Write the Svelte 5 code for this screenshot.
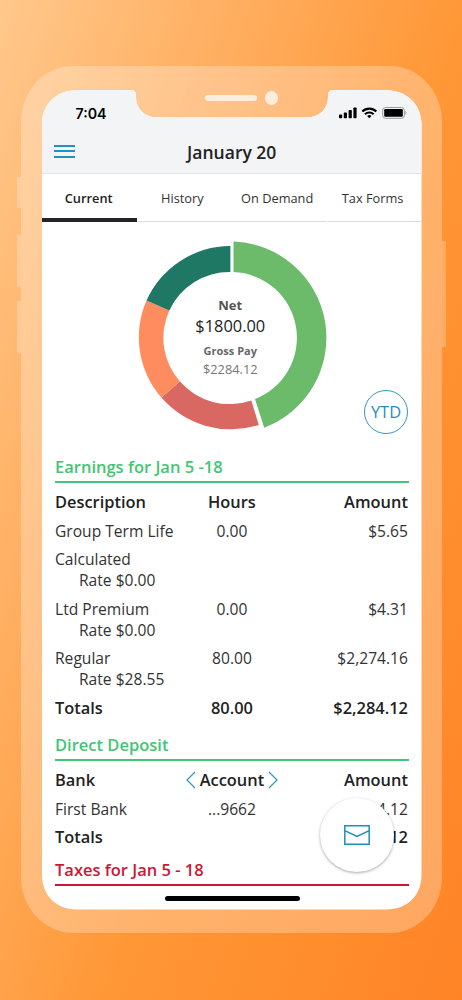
<script>
  const tabs = ['Current', 'History', 'On Demand', 'Tax Forms'];
  let activeTab = $state('Current');

  const sections = [
    {
      title: 'Earnings for Jan 5 -18',
      tone: 'green',
      columns: ['Description', 'Hours', 'Amount'],
      rows: [
        { label: 'Group Term Life', mid: '0.00', amount: '$5.65' },
        { label: 'Calculated', rate: 'Rate $0.00' },
        { label: 'Ltd Premium', rate: 'Rate $0.00', mid: '0.00', amount: '$4.31' },
        { label: 'Regular', rate: 'Rate $28.55', mid: '80.00', amount: '$2,274.16' },
      ],
      totals: ['80.00', '$2,284.12'],
    },
    {
      title: 'Direct Deposit',
      tone: 'green',
      columns: ['Bank', 'Account', 'Amount'],
      pager: true,
      rows: [{ label: 'First Bank', mid: '...9662', amount: '4.12' }],
      totals: ['', '4.12'],
    },
    { title: 'Taxes for Jan 5 - 18', tone: 'red' },
  ];

  const slices = [
    { color: '#6cbb6b', d: 'M95.5 3.5A96.3 96.3 0 0 1 126.2 189.8L117 161A65.7 65.7 0 0 0 95.5 34.1Z' },
    { color: '#d96862', d: 'M120.8 186.9A91.7 91.7 0 0 1 23.4 159.6L42 143.6A65.7 65.7 0 0 0 113.3 162.4Z' },
    { color: '#ff8c5e', d: 'M23.4 159.6A91.7 91.7 0 0 1 8.5 62.6L31.3 72.6A65.7 65.7 0 0 0 42 143.6Z' },
    { color: '#1e7863', d: 'M8.5 62.6A91.7 91.7 0 0 1 92.4 8.1V34A65.7 65.7 0 0 0 31.3 72.6Z' },
  ];
</script>

<div class="page">
  <div class="phone">
    <i class="side s1"></i>
    <i class="side s2"></i>
    <i class="side s3"></i>
    <i class="side s4"></i>
    <div class="speaker"><span></span><b></b></div>

    <div class="screen">
      <header>
        <div class="status">
          <span class="time">7:04</span>
          <svg width="68" height="13" viewBox="0 0 68 13">
            <rect x="0" y="8.5" width="3.2" height="3.7" rx="0.8" />
            <rect x="4.8" y="6.5" width="3.2" height="5.7" rx="0.8" />
            <rect x="9.6" y="4" width="3.2" height="8.2" rx="0.8" />
            <rect x="14.4" y="1.4" width="3.2" height="10.8" rx="0.8" />
            <g fill="none" stroke="#000" stroke-width="2.1">
              <path d="M23.3 5.4a10.1 10.1 0 0 1 14 0" />
              <path d="M26 8.2a6.2 6.2 0 0 1 8.6 0" />
            </g>
            <path d="M30.3 12.3l-2.2-2.2a3.2 3.2 0 0 1 4.4 0z" />
            <rect x="43.7" y="1.5" width="21.6" height="10.8" rx="2.8" fill="none" stroke="#999" />
            <rect x="45.2" y="3" width="18.6" height="7.8" rx="1.2" />
            <path d="M66.3 5.1c1.5.5 1.5 3.1 0 3.6z" fill="#999" />
          </svg>
        </div>
        <div class="title-bar">
          <button class="menu" aria-label="Menu"><i></i><i></i><i></i></button>
          <h1>January 20</h1>
        </div>
      </header>

      <nav>
        {#each tabs as tab}
          <button class:active={tab === activeTab} onclick={() => (activeTab = tab)}>{tab}</button>
        {/each}
      </nav>

      <div class="chart">
        <svg width="190" height="196" viewBox="0 0 190 196">
          {#each slices as slice}
            <path d={slice.d} fill={slice.color} />
          {/each}
        </svg>
        <div class="chart-text">
          <span class="net">Net</span>
          <span class="net-value">$1800.00</span>
          <span class="gross">Gross Pay</span>
          <span class="gross-value">$2284.12</span>
        </div>
        <button class="ytd">YTD</button>
      </div>

      <main>
        {#each sections as section}
          <section>
            <h2 class={section.tone}>{section.title}</h2>
            {#if section.columns}
              <div class="row strong head">
                <span>{section.columns[0]}</span>
                <span class="mid">
                  {#if section.pager}
                    <svg width="10" height="18" viewBox="0 0 10 18"><path d="M9 1L1 9l8 8" /></svg>
                  {/if}
                  {section.columns[1]}
                  {#if section.pager}
                    <svg width="10" height="18" viewBox="0 0 10 18"><path d="M1 1l8 8-8 8" /></svg>
                  {/if}
                </span>
                <span class="amount">{section.columns[2]}</span>
              </div>
              {#each section.rows as row}
                <div class="row">
                  <span>
                    {row.label}
                    {#if row.rate}<span class="rate">{row.rate}</span>{/if}
                  </span>
                  <span class="mid">{row.mid ?? ''}</span>
                  <span class="amount">{row.amount ?? ''}</span>
                </div>
              {/each}
              <div class="row strong">
                <span>Totals</span>
                <span class="mid">{section.totals[0]}</span>
                <span class="amount">{section.totals[1]}</span>
              </div>
            {/if}
          </section>
        {/each}
      </main>

      <button class="fab" aria-label="Messages">
        <svg width="26" height="20" viewBox="0 0 26 20" fill="none" stroke="#1f8fb8" stroke-width="1.5">
          <path d="M.8.8h24.4v18.4H.8zM.8 5.6L13 11.5l12.2-5.9" />
        </svg>
      </button>
      <div class="home-bar"></div>
    </div>
  </div>
</div>

<style>
  :global(body) {
    margin: 0;
  }

  .page {
    box-sizing: border-box;
    width: 462px;
    height: 1000px;
    padding: 66px 20px 0 21px;
    overflow: hidden;
    background: linear-gradient(110deg, #ffc88c 0%, #ffae60 29%, #ff9736 57%, #ff8426 100%);
    font-family: 'Open Sans', sans-serif;
    color: #333;
  }

  button {
    font: inherit;
    color: inherit;
    background: none;
    border: none;
    padding: 0;
    cursor: pointer;
  }

  .phone {
    position: relative;
    box-sizing: border-box;
    width: 421px;
    height: 867px;
    padding: 24px 20.5px 0 21px;
    border-radius: 52px / 56px;
    background: rgba(255, 255, 255, 0.27);
  }

  .side {
    position: absolute;
    left: -4px;
    width: 4px;
    height: 52px;
    background: rgba(255, 255, 255, 0.24);
  }

  .s1 {
    top: 111px;
    height: 30.5px;
  }

  .s2 {
    top: 169px;
  }

  .s3 {
    top: 235px;
  }

  .s4 {
    left: auto;
    right: -4px;
    top: 175px;
    height: 106px;
  }

  .speaker {
    position: absolute;
    top: 25px;
    left: 184px;
    display: flex;
    align-items: center;
    gap: 7.5px;
  }

  .speaker span {
    width: 52px;
    height: 6px;
    border-radius: 3px;
    background: rgba(255, 255, 255, 0.72);
  }

  .speaker b {
    width: 13.5px;
    height: 13.5px;
    border-radius: 50%;
    background: rgba(255, 255, 255, 0.72);
  }

  /* outline of the display, with the notch cut out of the top edge */
  .screen {
    position: relative;
    height: 819.5px;
    background: #fff;
    clip-path: path('M35 0H89Q94 0 94 5V7C94 19 103 27.3 115 27.3H265C277 27.3 286 19 286 7V5Q286 0 291 0H343C364 0 379.5 14 379.5 34V785C379.5 805 366 819.5 344 819.5H35C14 819.5 0 805 0 785V34C0 14 15 0 35 0Z');
  }

  header {
    box-sizing: border-box;
    height: 84px;
    background: #f3f4f6;
    border-bottom: 1px solid #e4e5e7;
  }

  .status {
    display: flex;
    justify-content: space-between;
    padding: 16px 14.5px 0 33.5px;
    height: 25px;
  }

  .time {
    font: 600 14.2px/15px Inter, sans-serif;
    color: #000;
  }

  .title-bar {
    position: relative;
    display: flex;
    align-items: center;
    justify-content: center;
    height: 42px;
  }

  .menu {
    position: absolute;
    left: 12px;
    top: 14px;
    display: grid;
    gap: 3.6px;
  }

  .menu i {
    width: 21px;
    height: 1.8px;
    background: #1f93b8;
  }

  h1 {
    margin: 0;
    font-size: 17.5px;
    line-height: 24px;
    font-weight: 600;
    color: #222;
  }

  nav {
    display: grid;
    grid-template-columns: repeat(4, 1fr);
    height: 48px;
  }

  nav button {
    box-sizing: border-box;
    font-size: 12.8px;
    padding: 1px 4px 0 0;
    border-bottom: 1.5px solid #ddd;
  }

  nav button:last-child {
    margin-left: 1px;
  }

  nav .active {
    font-weight: 600;
    padding: 4px 1.5px 0 0;
    color: #222;
    border-bottom: 4px solid #222327;
  }

  .chart {
    position: relative;
    display: flex;
    justify-content: center;
    height: 231px;
  }

  .chart > svg {
    margin: 16px 0 0 1.5px;
  }

  .chart-text {
    position: absolute;
    top: 73px;
    left: 0;
    width: 376.5px;
    display: flex;
    flex-direction: column;
    align-items: center;
  }

  .net {
    font-size: 13px;
    line-height: 20px;
    font-weight: 700;
    color: #555;
  }

  .net-value {
    font-size: 16.4px;
    line-height: 22px;
    color: #222;
  }

  .gross {
    margin-top: 5px;
    font-size: 11px;
    line-height: 18px;
    font-weight: 700;
    color: #666;
  }

  .gross-value {
    font-size: 12.8px;
    line-height: 18px;
    color: #777;
  }

  .ytd {
    position: absolute;
    left: 322px;
    top: 168px;
    width: 44px;
    height: 44px;
    padding-bottom: 1px;
    border: 1px solid #3399bd;
    border-radius: 50%;
    font-size: 16.4px;
    color: #2590b5;
  }

  main {
    padding: 0 13px;
    font-size: 15.6px;
    line-height: 21px;
  }

  section {
    padding-bottom: 8.2px;
  }

  section:nth-child(2) {
    padding-bottom: 4.2px;
  }

  h2 {
    margin: 0;
    font-size: 16.5px;
    line-height: 28px;
    font-weight: 600;
    border-bottom: 2px solid;
  }

  .green {
    color: #43c573;
  }

  .red {
    color: #cc1735;
  }

  .row {
    display: grid;
    grid-template-columns: 1fr 111px 1fr;
    padding: 3.8px 0.6px 3.8px 0;
  }

  .strong {
    padding-top: 3px;
    padding-bottom: 4.6px;
    font-size: 16.4px;
    font-weight: 600;
    color: #222;
  }

  .row.head {
    margin-top: 5.2px;
  }

  .mid {
    display: flex;
    justify-content: center;
    align-items: center;
    align-self: start;
    gap: 3.5px;
    min-height: 21px;
    padding-left: 1px;
  }

  .mid svg {
    fill: none;
    stroke: #2f97bd;
    stroke-width: 1.2;
  }

  .amount {
    text-align: right;
  }

  .rate {
    display: block;
    padding-left: 24px;
  }

  .fab {
    position: absolute;
    left: 277.5px;
    top: 708px;
    width: 74px;
    height: 74px;
    display: grid;
    place-items: center;
    border-radius: 50%;
    background: #fff;
    box-shadow: 0 1px 3px rgba(0, 0, 0, 0.35);
  }

  .home-bar {
    position: absolute;
    left: 122.5px;
    top: 806px;
    width: 135px;
    height: 5px;
    border-radius: 3px;
    background: #000;
  }
</style>
